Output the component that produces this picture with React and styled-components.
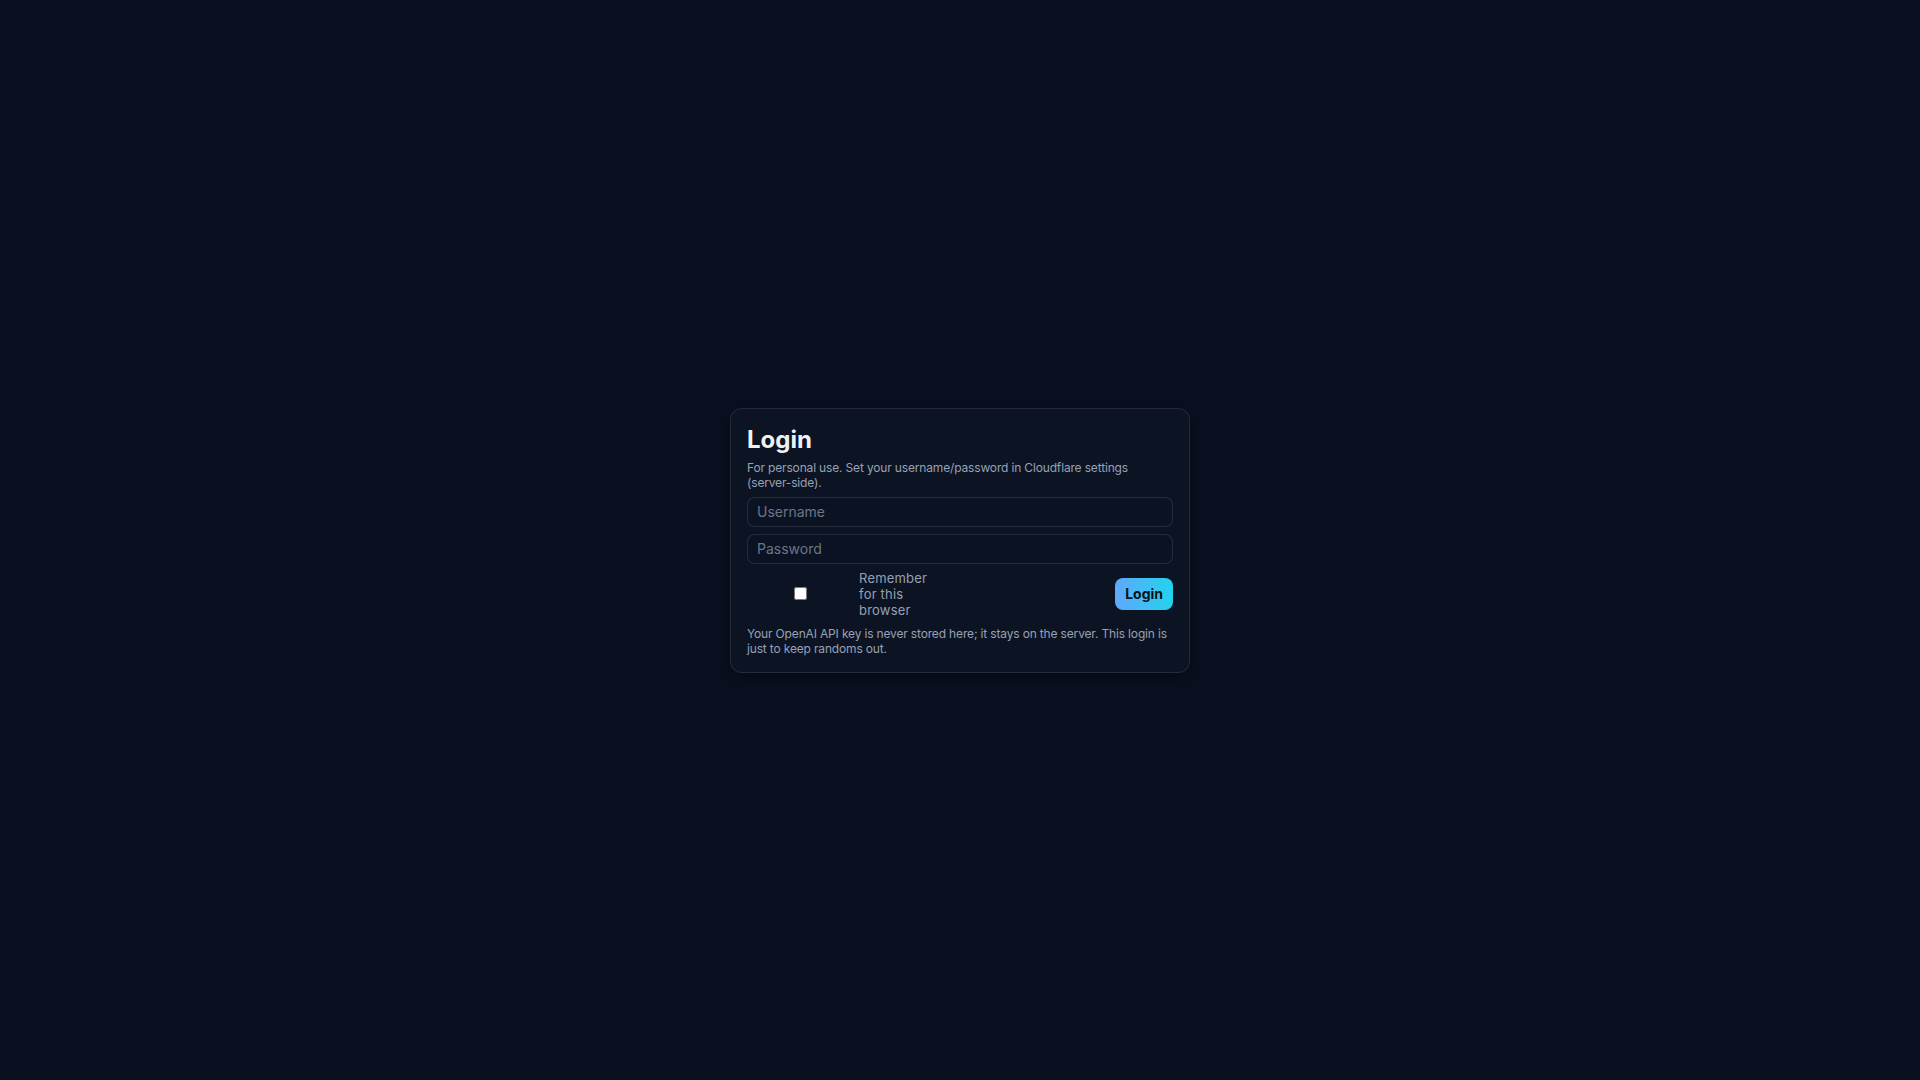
import React from 'react';
import styled, { createGlobalStyle } from 'styled-components';

const GlobalStyle = createGlobalStyle`
  html, body {
    margin: 0;
    padding: 0;
    height: 100%;
    background: #0a1020;
  }
  body {
    font-family: Inter, 'Noto Sans', 'Liberation Sans', sans-serif;
    color: #e5e7eb;
  }
  #root {
    min-height: 100vh;
  }
`;

const Page = styled.main`
  min-height: 100vh;
  display: flex;
  align-items: center;
  justify-content: center;
  background: #0a1020;
`;

const Card = styled.form`
  width: 460px;
  box-sizing: border-box;
  padding: 16px;
  background: #0c1424;
  border: 1px solid rgba(148, 163, 184, 0.16);
  border-radius: 12px;
  box-shadow: 0 6px 18px rgba(0, 0, 0, 0.35);
  display: flex;
  flex-direction: column;
  gap: 7px;
`;

const Title = styled.h2`
  margin: 0 0 -1px;
  font-size: 24px;
  line-height: 29px;
  font-weight: 700;
  color: #eef1f6;
`;

const Muted = styled.p`
  margin: 0;
  font-size: 12px;
  line-height: 15px;
  letter-spacing: -0.16px;
  color: #97a1b3;
`;

const Input = styled.input`
  box-sizing: border-box;
  width: 100%;
  height: 30px;
  padding: 0 9px;
  border: 1px solid rgba(148, 163, 184, 0.18);
  border-radius: 8px;
  background: #0b1322;
  color: #e5e7eb;
  font-family: inherit;
  font-size: 14px;
  outline: none;
  &::placeholder {
    color: #6b7588;
  }
`;

const Row = styled.div`
  display: flex;
  align-items: center;
  justify-content: space-between;
  margin: -1px 0 1px;
`;

const Remember = styled.label`
  display: flex;
  align-items: center;
  gap: 6px;
  font-size: 13px;
  line-height: 16px;
  color: #97a1b3;
  letter-spacing: 0.2px;
`;

const CheckWrap = styled.span`
  width: 106px;
  display: flex;
  justify-content: center;
  input {
    margin: 0;
    width: 13px;
    height: 13px;
  }
`;

const LabelText = styled.span`
  width: 66px;
`;

const Button = styled.button`
  height: 32px;
  padding: 0 10px;
  border: none;
  border-radius: 8px;
  background: linear-gradient(90deg, #5fa8fb, #22d3ee);
  color: #0b1220;
  font-family: inherit;
  font-size: 14px;
  font-weight: 700;
  cursor: pointer;
`;

export default function App() {
  return (
    <>
      <GlobalStyle />
      <Page>
        <Card onSubmit={(e) => e.preventDefault()}>
          <Title>Login</Title>
          <Muted>
            For personal use. Set your username/password in Cloudflare settings (server-side).
          </Muted>
          <Input type='text' placeholder='Username' />
          <Input type='password' placeholder='Password' />
          <Row>
            <Remember>
              <CheckWrap>
                <input type='checkbox' />
              </CheckWrap>
              <LabelText>Remember for this browser</LabelText>
            </Remember>
            <Button type='submit'>Login</Button>
          </Row>
          <Muted>
            Your OpenAI API key is never stored here; it stays on the server. This login is just to
            keep randoms out.
          </Muted>
        </Card>
      </Page>
    </>
  );
}
